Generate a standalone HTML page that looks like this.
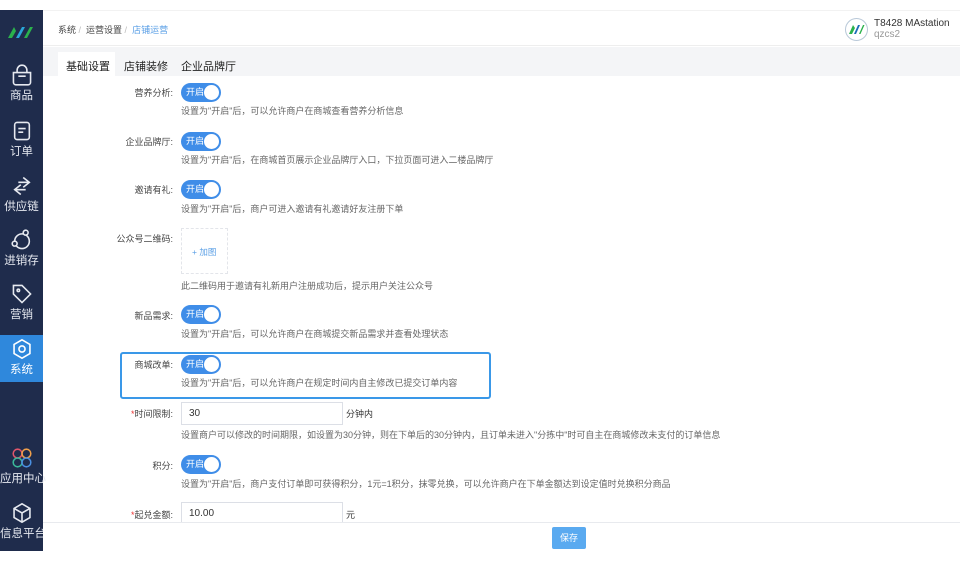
<!DOCTYPE html>
<html><head><meta charset="utf-8"><style>
*{margin:0;padding:0;box-sizing:border-box}
body{width:960px;height:561px;background:#fff;position:relative;overflow:hidden;font-family:"Liberation Sans","Noto Sans CJK SC",sans-serif;color:#333}
.a{position:absolute;white-space:nowrap}
#sb{left:0;top:10px;width:43px;height:541px;background:#1f2c4c}
.ni{position:absolute;left:0;width:43px;text-align:center;color:#e6e9f0;font-size:11.5px}
.ni svg{display:block;margin:0 auto 1px}
.lab{position:absolute;right:787px;font-size:9px;color:#444;text-align:right}
.tg{position:absolute;left:181px;width:40px;height:19px;border-radius:10px;background:#3f8de8;color:#fff;font-size:9px;line-height:19px;padding-left:5px}
.tg:after{content:"";position:absolute;right:2px;top:2px;width:15px;height:15px;border-radius:50%;background:#fff}
.ds{position:absolute;left:181px;font-size:9px;color:#666;white-space:nowrap}
.inp{position:absolute;left:181px;width:162px;height:23px;border:1px solid #dcdfe6;font-size:10px;line-height:21px;padding-left:7px;color:#333}
.st{color:#e33}
</style></head><body>
<div class="a" id="sb">
 <svg class="a" style="left:7px;top:15px" width="30" height="14" viewBox="0 0 30 14"><path d="M1 13L7 2L9 6L5 13Z" fill="#2bb24c"/><path d="M9 13L15 2L18 2L12 13Z" fill="#2aa6d8"/><path d="M17 13L23 2L26 2L20 13Z" fill="#2bb24c"/></svg>
 <div class="ni" style="top:54px"><svg width="22" height="22" viewBox="0 0 18 18" fill="none" stroke="#e6e9f0" stroke-width="1.3"><path d="M2 7h14v8a2 2 0 0 1-2 2H4a2 2 0 0 1-2-2zM5 7V5a4 4 0 0 1 8 0v2M6 10h6"/></svg>商品</div>
 <div class="ni" style="top:110px"><svg width="22" height="22" viewBox="0 0 18 18" fill="none" stroke="#e6e9f0" stroke-width="1.3"><rect x="3" y="2" width="12" height="14" rx="2"/><path d="M6 7h6M6 10h4"/></svg>订单</div>
 <div class="ni" style="top:165px"><svg width="22" height="22" viewBox="0 0 18 18" fill="none" stroke="#e6e9f0" stroke-width="1.3"><path d="M10 2l5 4-5 4M15 6H6M8 8l-5 4 5 4M3 12h9"/></svg>供应链</div>
 <div class="ni" style="top:219px"><svg width="22" height="22" viewBox="0 0 18 18" fill="none" stroke="#e6e9f0" stroke-width="1.3"><circle cx="9" cy="10" r="6"/><circle cx="12" cy="3" r="2" fill="#1f2c4c"/><circle cx="3" cy="12" r="2" fill="#1f2c4c"/></svg>进销存</div>
 <div class="ni" style="top:273px"><svg width="22" height="22" viewBox="0 0 18 18" fill="none" stroke="#e6e9f0" stroke-width="1.3"><path d="M2 2h7l7 7-7 7-7-7z"/><circle cx="6" cy="6" r="1"/></svg>营销</div>
 <div class="a" style="left:0;top:325px;width:43px;height:47px;background:#2f88dc"></div>
 <div class="a" style="left:39px;top:344px;border:4px solid transparent;border-right-color:#fff"></div>
 <div class="ni" style="top:328px;color:#fff"><svg width="22" height="22" viewBox="0 0 18 18" fill="none" stroke="#fff" stroke-width="1.3"><path d="M9 1.5l6.5 3.75v7.5L9 16.5l-6.5-3.75v-7.5z"/><circle cx="9" cy="9" r="2.5"/></svg>系统</div>
 <div class="ni" style="top:437px"><svg width="22" height="22" viewBox="0 0 20 20" fill="none" stroke-width="1.4"><circle cx="6" cy="6" r="4" stroke="#e0566b"/><circle cx="14" cy="6" r="4" stroke="#f0a04b"/><circle cx="6" cy="14" r="4" stroke="#3bb99a"/><circle cx="14" cy="14" r="4" stroke="#4a90e2"/></svg>应用中心</div>
 <div class="ni" style="top:492px"><svg width="22" height="22" viewBox="0 0 18 18" fill="none" stroke="#e6e9f0" stroke-width="1.3"><path d="M9 1.5l6.5 3.75v7.5L9 16.5l-6.5-3.75v-7.5zM2.5 5.25L9 9l6.5-3.75M9 9v7.5"/></svg>信息平台</div>
</div>
<div class="a" style="left:43px;top:10px;width:917px;height:36px;background:#fff;border-bottom:1px solid #eee;border-top:1px solid #f2f2f2"></div>
<div class="a" style="left:58px;top:23px;font-size:9px;color:#444">系统 <span style="color:#bbb">/</span> &nbsp;运营设置 <span style="color:#bbb">/</span> &nbsp;<span style="color:#5a9fe6">店铺运营</span></div>
<div class="a" style="left:845px;top:18px;width:23px;height:23px;border-radius:50%;border:1px solid #b8c8d8;background:#fff"></div>
<svg class="a" style="left:848px;top:24px" width="17" height="11" viewBox="0 0 17 11"><path d="M1 10L5 1L7 4L4 10Z" fill="#2bb24c"/><path d="M6 10L10 1L12 1L8 10Z" fill="#1c6db8"/><path d="M11 10L15 1L16.5 1L12.5 10Z" fill="#2bb24c"/></svg>
<div class="a" style="left:874px;top:18px;font-size:10px;color:#333">T8428 MAstation</div>
<div class="a" style="left:874px;top:29px;font-size:10px;color:#999">qzcs2</div>
<div class="a" style="left:43px;top:47px;width:917px;height:29px;background:#f4f5f7"></div>
<div class="a" style="left:58px;top:52px;width:57px;height:24px;background:#fff"></div>
<div class="a" style="left:66px;top:58px;font-size:11px;color:#222">基础设置</div>
<div class="a" style="left:124px;top:58px;font-size:11px;color:#222">店铺装修</div>
<div class="a" style="left:181px;top:58px;font-size:11px;color:#222">企业品牌厅</div>

<div class="lab" style="top:86px">营养分析:</div><div class="tg" style="top:83px">开启</div><div class="ds" style="top:104px">设置为"开启"后，可以允许商户在商城查看营养分析信息</div>
<div class="lab" style="top:135px">企业品牌厅:</div><div class="tg" style="top:132px">开启</div><div class="ds" style="top:153px">设置为"开启"后，在商城首页展示企业品牌厅入口，下拉页面可进入二楼品牌厅</div>
<div class="lab" style="top:183px">邀请有礼:</div><div class="tg" style="top:180px">开启</div><div class="ds" style="top:202px">设置为"开启"后，商户可进入邀请有礼邀请好友注册下单</div>
<div class="lab" style="top:232px">公众号二维码:</div>
<div class="a" style="left:181px;top:228px;width:47px;height:46px;border:1px dashed #e3e5ea"></div>
<div class="a" style="left:192px;top:246px;font-size:8.5px;color:#5a9fe6">+ 加图</div>
<div class="ds" style="top:279px">此二维码用于邀请有礼新用户注册成功后，提示用户关注公众号</div>
<div class="lab" style="top:309px">新品需求:</div><div class="tg" style="top:305px">开启</div><div class="ds" style="top:327px">设置为"开启"后，可以允许商户在商城提交新品需求并查看处理状态</div>
<div class="a" style="left:120px;top:352px;width:371px;height:47px;border:2px solid #3a98e8;border-radius:3px"></div>
<div class="lab" style="top:358px">商城改单:</div><div class="tg" style="top:355px">开启</div><div class="ds" style="top:376px">设置为"开启"后，可以允许商户在规定时间内自主修改已提交订单内容</div>
<div class="lab" style="top:407px"><span class="st">*</span>时间限制:</div><div class="inp" style="top:402px">30</div><div class="a" style="left:346px;top:407px;font-size:9px">分钟内</div>
<div class="ds" style="top:428px">设置商户可以修改的时间期限，如设置为30分钟，则在下单后的30分钟内，且订单未进入"分拣中"时可自主在商城修改未支付的订单信息</div>
<div class="lab" style="top:459px">积分:</div><div class="tg" style="top:455px">开启</div><div class="ds" style="top:477px">设置为"开启"后，商户支付订单即可获得积分，1元=1积分，抹零兑换，可以允许商户在下单金额达到设定值时兑换积分商品</div>
<div class="lab" style="top:508px"><span class="st">*</span>起兑金额:</div><div class="inp" style="top:502px">10.00</div><div class="a" style="left:346px;top:508px;font-size:9px">元</div>
<div class="a" style="left:43px;top:522px;width:917px;height:29px;background:#fff;border-top:1px solid #e8eaee"></div>
<div class="a" style="left:552px;top:527px;width:34px;height:22px;background:#5aaaf0;border-radius:2px;color:#fff;font-size:9px;line-height:22px;text-align:center">保存</div>
</body></html>
